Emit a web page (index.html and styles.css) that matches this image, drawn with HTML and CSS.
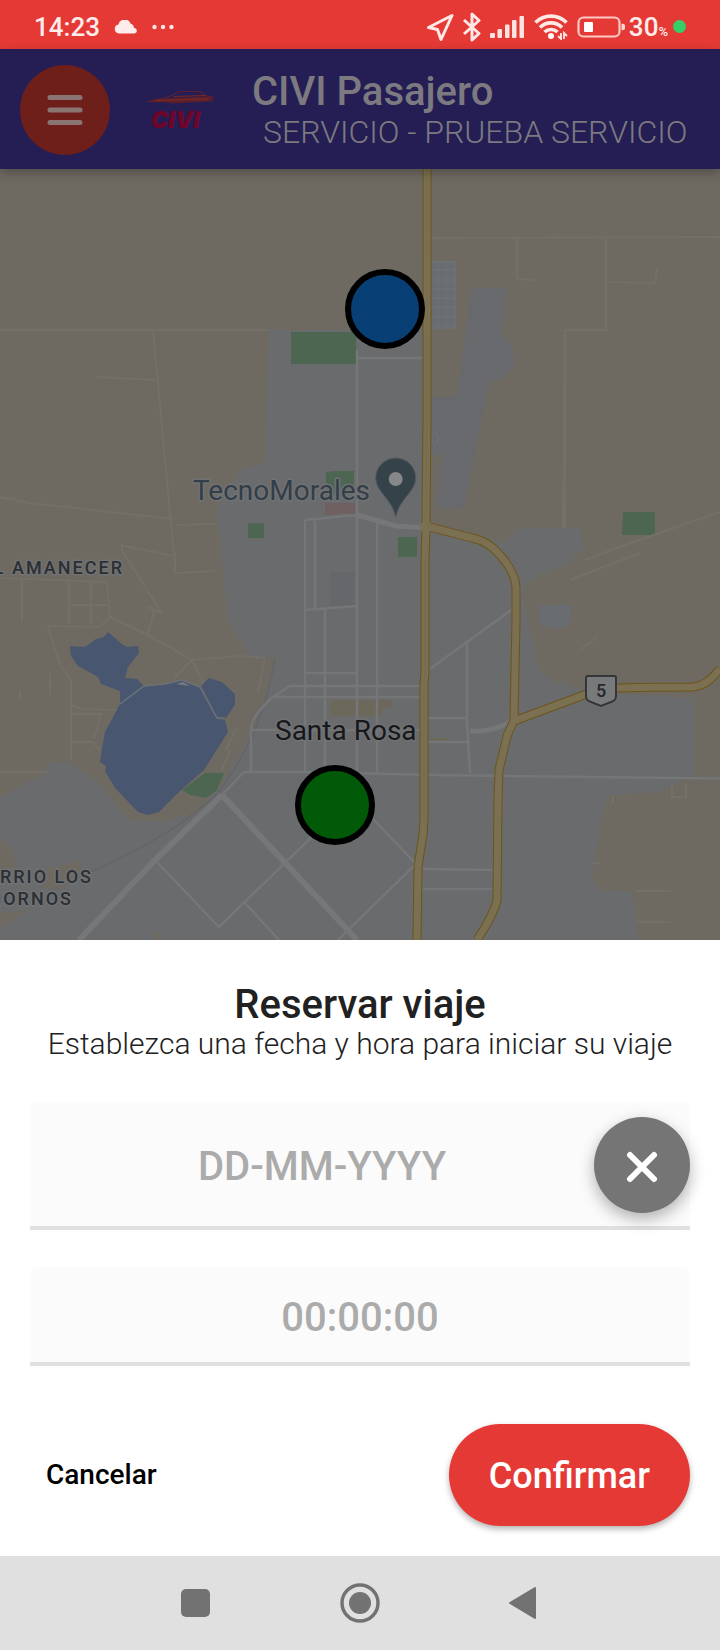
FILE: index.html
```html
<!DOCTYPE html>
<html lang="es">
<head>
<meta charset="utf-8">
<meta name="viewport" content="width=device-width, initial-scale=1">
<title>CIVI Pasajero</title>
<link rel="stylesheet" href="styles.css">
</head>
<body>
<div class="screen">
  <div class="status">
    <span class="status-time">14:23</span>
    <svg class="status-cloud" width="24" height="14" viewBox="0 0 24 14"><path d="M5 13.500a4.500 4.500 0 0 1-.6-8.900A6.300 6.300 0 0 1 16.500 3.600 5 5 0 0 1 20 8a2.800 2.800 0 0 1 .8 5.500z" fill="#ffeceb"/></svg>
    <svg width="22" height="6" viewBox="0 0 22 6" fill="#ffe3e1"><circle cx="2.500" cy="3" r="2.200"/><circle cx="11" cy="3" r="2.200"/><circle cx="19.500" cy="3" r="2.200"/></svg>
    <span class="status-icons">
      <svg width="27" height="28" viewBox="0 0 27 28"><path d="M1.500 14.500 25 2.500 14 26.500 10.500 16.500z" fill="none" stroke="#ffe9e7" stroke-width="3" stroke-linejoin="round"/></svg>
      <svg width="18" height="30" viewBox="0 0 18 30"><path d="M1 8 16 21.500 9 28V2L16 8.500 1 22" fill="none" stroke="#ffe9e7" stroke-width="3" stroke-linejoin="round"/></svg>
      <svg width="35" height="24" viewBox="0 0 35 24" fill="#ffe3e1"><rect x="0" y="18" width="5" height="5" rx="1"/><rect x="7.500" y="14" width="4.500" height="9" rx="1"/><rect x="15" y="9.500" width="4.500" height="13.500" rx="1"/><rect x="22" y="5" width="4.500" height="18" rx="1"/><rect x="29.500" y="1" width="4.500" height="22" rx="1"/></svg>
      <svg width="34" height="26" viewBox="0 0 34 26"><g fill="none" stroke="#ffe9e7" stroke-width="3.600"><path d="M1.500 8.500a22 22 0 0 1 31 0"/><path d="M6 13.500a15.500 15.500 0 0 1 22 0"/><path d="M10.500 18a9.500 9.500 0 0 1 13 0"/></g><circle cx="17" cy="22" r="3" fill="#fff"/><path d="M27 19v6l-3-3M30 25v-6l3 3" stroke="#ffe9e7" stroke-width="1.800" fill="none"/></svg>
      <svg class="status-battery" width="48" height="22" viewBox="0 0 48 22"><rect x="1.500" y="1.500" width="41" height="19" rx="5" fill="none" stroke="#ffc9c5" stroke-width="2.200"/><rect x="7" y="6" width="9" height="10" rx="1" fill="#fff"/><path d="M45 8a3 3 0 0 1 0 6z" fill="#ffd4d1" stroke="#ffd4d1"/></svg>
      <span class="status-level">30<small>%</small></span>
      <i class="status-dot"></i>
    </span>
  </div>

  <header class="bar">
    <button class="menu" type="button" aria-label="Menú"><svg width="36" height="32" viewBox="0 0 36 32"><path d="M3 3.500h30M3 16h30M3 28.500h30" stroke="#8b7572" stroke-width="5" stroke-linecap="round"/></svg></button>
    <svg class="logo" width="70" height="44" viewBox="0 0 70 44">
      <path d="M1 12 22 7 34 1.500H54L60 6 67 7C68 9 66 11 63 11L24 13" fill="none" stroke="#5c2030" stroke-width="1.200"/>
      <path d="M1 12C9 8 18 9 26 8L63 6.500 66 8C66 10 64 11 60 11.500L24 12.500z" fill="#5f1f2a"/>
      <path d="M9 10.500 62 9M28 6.500 60 5.500" fill="none" stroke="#7a2a20" stroke-width="1"/>
      <text class="logo-text" x="5" y="38">CIVI</text>
    </svg>
    <div class="bar-text">
      <h1 class="bar-title">CIVI Pasajero</h1>
      <p class="bar-sub">SERVICIO - PRUEBA SERVICIO</p>
    </div>
  </header>

  <main class="map">
    <svg class="map-canvas" viewBox="0 169 720 771" role="img" aria-label="Mapa de Santa Rosa">
      <rect y="169" width="720" height="771" fill="#6e6a62"/>
      <!-- built-up area -->
      <path fill="#696b6d" d="M268 330H427V522L480 538 505 543 520 528H580L583 550 560 568 540 574 526 585 523 595 538 668 550 680 590 692 694 698V774L660 792 610 795 602 812 592 880 600 890 632 892 638 940H0V797L45 773 48 762 70 763 95 780 115 803 130 820 160 822 195 813 222 785 250 735 265 700 275 658 250 656 228 620 222 560 217 510 240 470 266 463z"/>
      <path fill="#67696c" d="M472 287 506 288 502 336 513 346 514 366 500 380 489 382 464 508 437 509 442 455H431V398L457 396z"/>
      <path fill="#696c70" d="M431 261H455V329H431zM540 605H571L569 625 556 629 538 624z"/>
      <path fill="#6e6a62" d="M0 838 14 850 15 868 0 875zM42 870 80 861 82 875 60 890 42 888zM0 913 30 910 0 928zM155 933h5v7h-5z"/>
      <path fill="#6c695b" d="M330 700h62v8h-10v8h-52zM430 738h18v5h-18z"/>
      <path fill="#4d6652" d="M291 332H356V364H291zM248 523h16v15h-16zM326 472l10-1h18v24h-28zM398 537h19v20h-19zM623 512h32v23h-33z"/>
      <path fill="#705f61" d="M325 503h30v12l-12-2-18 2z"/>
      <path fill="#65676a" d="M330 572h24v35h-24z"/>
      <!-- minor rural tracks -->
      <g fill="none" stroke="#727068" stroke-width="2">
        <path d="M0 330H268M153 331 174 555M97 377 155 380M0 497 30 503 172 519M176 525 216 524M120 545 173 556M122 545v6l40 62-14-6M431 238 720 237M517 238V279L537 280M606 237V330H565V528M606 282 655 283 657 268M565 330 563 528M585 560 622 546 720 512M570 580 640 553M580 650 597 637"/>
        <path d="M22 580v42M0 578 107 582 110 617 100 627 48 626 60 665 71 680V760M69 582v42M91 582v42M69 605h38M110 617 148 635 192 660 240 656 265 658 258 692M154 610 148 635M175 553v20l40-2M192 660l12 25M192 660l-18 18M50 673v22M20 690v10M71 705l12 4 35 1M71 714h30l-7 25M71 742h22l7 8M0 772h48M230 750 222 770M236 728l-10 22M672 785v12h14v-14M613 795v8M592 863h8M635 891h36M637 922h34"/>
      </g>
      <!-- lake -->
      <g fill="#48576f">
        <path d="M70 646 85 647 96 639 104 637 108 632 123 645 128 647 138 646 139 653 128 667 125 678 137 679 144 686 120 704V691L101 684 98 677 78 666 71 656z"/>
        <path d="M144 686 165 684 182 680 200 687 217 718 225 720 228 732 204 770 181 790 159 812 148 815 138 812 115 788 105 771 106 766 100 762 102 748 105 732 120 704z"/>
        <path d="M201 686 209 678 222 682 235 694V705L225 719 217 717z"/>
      </g>
      <path d="M120 704 144 686 165 684 182 680 200 687 217 718H225" fill="none" stroke="#6c7278" stroke-width="1.500"/>
      <path d="M176 684 183 682 190 686z" fill="#777b7d"/>
      <path fill="#4d6652" d="M182 790 205 773 224 773 217 790 206 798 190 795z"/>
      <path d="M218 793Q170 838 90 872M275 660Q262 735 218 793" stroke="#636568" stroke-width="1.500" fill="none"/>
      <!-- streets -->
      <g fill="none" stroke="#747678" stroke-width="2.500">
        <path d="M357 350V771M357 358H425M305 520V771M315 521V609M325 609V771M377 523V773M305 520 345 516 357 515M305 610 357 606M305 673H357M425 686H290L273 697Q251 716 251 730V772M273 697H423M251 730H420M467 640V722L470 773M427 671 514 608M427 718H467M427 742H470M222 795 244 772H305L435 775 720 778.500M423 869 495 870M423 889H494"/>
        <path d="M372 818 416 864 338 940M320 829 219 927 155 860M245 903 279 940"/>
      </g>
      <path d="M222 795 156 859 79 940M222 795 357 940" fill="none" stroke="#757779" stroke-width="6"/>
      <path d="M357 515 396 526 426 528M470 731Q490 733 510 722" fill="none" stroke="#757779" stroke-width="5"/>
      <g fill="none" stroke="#70747a" stroke-width="1"><path d="M431 262H455V328H431M431 270h24M431 280h24M431 289h24M431 298h24M431 307h24M431 317h24M438 262v66M446 262v66"/><ellipse cx="435" cy="438" rx="3" ry="6"/></g>
      <!-- highways -->
      <g fill="none" stroke-linejoin="round">
        <path stroke="#6d5518" stroke-width="9" d="M427 169V420L426 515 426 527 425 560V672L424 685V820L423 835 418 866 417 940M426 526 445 531 472 538Q488 541 500 555Q515 572 516 587V620L514 720 507 736 499 770 498 800 497 900Q494 914 477 940M514 721 600 689Q630 687 692 687C706 686 712 678 720 669"/>
        <path stroke="#7b7052" stroke-width="7" d="M427 169V420L426 515 426 527 425 560V672L424 685V820L423 835 418 866 417 940M426 526 445 531 472 538Q488 541 500 555Q515 572 516 587V620L514 720 507 736 499 770 498 800 497 900Q494 914 477 940M514 721 600 689Q630 687 692 687C706 686 712 678 720 669"/>
        <path stroke="#766b50" stroke-width="1" d="M427 169V420L426 515M425 560V672L424 685V820"/>
      </g>
      <circle cx="426" cy="527" r="6" fill="#7b7052"/>
      <path d="M588 676h26q2 0 2 2v18c0 4-2 5-5 6l-10 4-10-4c-3-1-5-2-5-6v-18q0-2 2-2z" fill="#77797b" stroke="#35363a" stroke-width="2"/>
      <text class="label label-route" x="601" y="697">5</text>
      <path d="M395.700 458a20 20 0 0 1 20 20c0 14-16 20-20 39-4-19-20-25-20-39a20 20 0 0 1 20-20z" fill="#364249" stroke="#505b61"/>
      <circle cx="395.700" cy="479" r="7" fill="#858788"/>
      <text class="label label-poi" x="193" y="500">TecnoMorales</text>
      <text class="label label-city" x="275" y="740">Santa Rosa</text>
      <text class="label label-area" x="124" y="574">EL AMANECER</text>
      <text class="label label-area" x="93" y="883">BARRIO LOS</text>
      <text class="label label-area" x="73" y="905">HORNOS</text>
      <circle cx="385" cy="309" r="37" fill="#083f74" stroke="#000" stroke-width="6"/>
      <circle cx="335" cy="805" r="37" fill="#015a08" stroke="#000" stroke-width="6"/>
    </svg>
  </main>

  <form class="sheet">
    <h2 class="sheet-title">Reservar viaje</h2>
    <p class="sheet-sub">Establezca una fecha y hora para iniciar su viaje</p>
    <div class="field field-date">
      <input class="field-input" type="text" placeholder="DD-MM-YYYY" aria-label="Fecha">
      <button class="clear" type="button" aria-label="Borrar fecha"><svg width="32" height="32" viewBox="0 0 32 32"><path d="m4 4 24 24M28 4 4 28" stroke="#fff" stroke-width="6" stroke-linecap="round"/></svg></button>
    </div>
    <div class="field field-time">
      <input class="field-input" type="text" placeholder="00:00:00" aria-label="Hora">
    </div>
    <div class="actions">
      <button class="cancel" type="button">Cancelar</button>
      <button class="confirm" type="submit">Confirmar</button>
    </div>
  </form>

  <nav class="nav" aria-label="Sistema">
    <button class="nav-button" type="button" aria-label="Recientes"><svg width="40" height="40" viewBox="0 0 40 40"><rect x="5" y="6" width="29" height="28" rx="5" fill="#727272"/></svg></button>
    <button class="nav-button" type="button" aria-label="Inicio"><svg width="40" height="40" viewBox="0 0 40 40"><circle cx="20" cy="20" r="18" fill="none" stroke="#727272" stroke-width="3.400"/><circle cx="20" cy="20" r="11" fill="#727272"/></svg></button>
    <button class="nav-button" type="button" aria-label="Atrás"><svg width="40" height="40" viewBox="0 0 40 40"><path d="M6 20 31 5v30z" fill="#727272" stroke="#727272" stroke-width="2" stroke-linejoin="round"/></svg></button>
  </nav>
</div>
</body>
</html>
```

FILE: styles.css
```css
* { box-sizing: border-box; }

body {
  margin: 0;
  background: #fff;
  color: #212121;
  font-family: Roboto, "Liberation Sans", sans-serif;
}

h1, h2, p { margin: 0; }

button {
  padding: 0;
  border: 0;
  background: none;
  font-family: inherit;
}

svg { display: block; flex: none; }

.screen {
  display: flex;
  flex-direction: column;
  min-height: 100vh;
}

/* system status bar */
.status {
  display: flex;
  align-items: center;
  gap: 14px;
  padding: 4px 34px 0;
  height: 49px;
  background: #e53935;
  color: #ffeceb;
}

.status-time {
  font-size: 26px;
  font-weight: 500;
  line-height: 32px;
}

.status-icons {
  display: flex;
  align-items: center;
  gap: 9px;
  margin-left: auto;
}

.status-battery { margin-right: -5px; }

.status-level {
  display: flex;
  align-items: baseline;
  font-size: 26px;
  font-weight: 500;
  line-height: 32px;
}

.status-level small {
  font-size: 13px;
  line-height: 16px;
}

.status-dot {
  width: 13px;
  height: 13px;
  margin-left: -4px;
  border-radius: 50%;
  background: #34d067;
}

/* application bar */
.bar {
  position: relative;
  display: flex;
  align-items: center;
  padding: 2px 30px 0 20px;
  height: 120px;
  background: #241e54;
  box-shadow: 0 4px 10px rgba(0, 0, 0, 0.25);
  color: #7c7a80;
}

.menu {
  display: flex;
  align-items: center;
  justify-content: center;
  flex: none;
  width: 90px;
  height: 90px;
  border-radius: 50%;
  background: #6e1f1a;
}

.logo {
  margin: 4px 36px 0;
  overflow: visible;
}

.logo-text {
  fill: #70052a;
  font-family: Inter, Roboto, sans-serif;
  font-size: 23px;
  font-style: italic;
  font-weight: 900;
}

.bar-text { flex: 1; }

.bar-title {
  font-size: 40px;
  font-weight: 500;
  line-height: 44px;
}

.bar-sub {
  padding-left: 11px;
  font-size: 32px;
  font-weight: 300;
  line-height: 36px;
  white-space: nowrap;
}

/* map */
.map-canvas {
  width: 100%;
  height: auto;
}

.label {
  stroke: #707274;
  stroke-width: 3px;
  stroke-linejoin: round;
  paint-order: stroke;
}

.label-poi { fill: #333e48; font-size: 28px; }
.label-city { fill: #17181b; font-size: 28px; }

.label-area {
  fill: #2c2f33;
  font-size: 18px;
  font-weight: 500;
  letter-spacing: 2px;
  text-anchor: end;
}

.label-route {
  fill: #27282b;
  font-size: 18px;
  font-weight: 500;
  text-anchor: middle;
  stroke: none;
}

/* reservation sheet */
.sheet {
  padding: 41px 30px 30px;
  background: #fff;
}

.sheet-title {
  font-size: 40px;
  font-weight: 500;
  line-height: 48px;
  text-align: center;
}

.sheet-sub {
  font-size: 30px;
  font-weight: 300;
  line-height: 30px;
  text-align: center;
}

.field {
  display: flex;
  align-items: center;
  border-bottom: 4px solid #e0e0e0;
  border-radius: 8px 8px 0 0;
  background: #fbfbfb;
}

.field-date {
  height: 128px;
  margin-top: 43px;
  padding: 2px 0 0 20px;
}

.field-time {
  height: 99px;
  margin-top: 37px;
  padding-top: 4px;
}

.field-input {
  flex: 1;
  min-width: 0;
  height: 100%;
  padding: 2px 0 0;
  border: 0;
  outline: 0;
  background: none;
  color: #212121;
  font-family: inherit;
  font-size: 40px;
  font-weight: 500;
  text-align: center;
}

.field-input::placeholder { color: #ababab; opacity: 1; }

.clear {
  display: flex;
  align-items: center;
  justify-content: center;
  flex: none;
  width: 96px;
  height: 96px;
  padding-top: 4px;
  border-radius: 50%;
  background: #757575;
  box-shadow: 0 6px 16px rgba(0, 0, 0, 0.3);
}

.actions {
  display: flex;
  align-items: center;
  justify-content: space-between;
  margin-top: 58px;
  padding-left: 16px;
}

.cancel {
  color: #000;
  font-size: 28px;
  font-weight: 500;
  line-height: 40px;
}

.confirm {
  height: 102px;
  padding: 2px 40px 0;
  border-radius: 51px;
  background: #e53935;
  box-shadow: 0 3px 6px rgba(0, 0, 0, 0.3);
  color: #fff;
  font-size: 36px;
  font-weight: 500;
}

/* system navigation */
.nav {
  display: flex;
  align-items: center;
  justify-content: center;
  gap: 100px;
  flex: 1;
  min-height: 94px;
  background: #e0e0e0;
}

.nav-button {
  display: flex;
  align-items: center;
  justify-content: center;
  width: 64px;
  height: 64px;
}
```
